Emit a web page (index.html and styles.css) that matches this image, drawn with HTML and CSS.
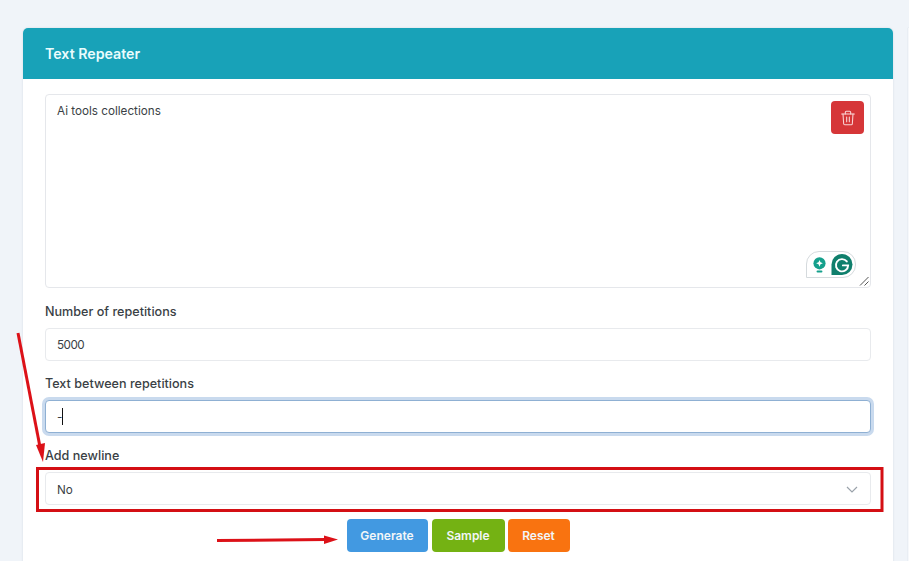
FILE: index.html
```html
<!DOCTYPE html>
<html lang="en">
<head>
    <meta charset="UTF-8">
    <meta name="viewport" content="width=device-width, initial-scale=1.0">
    <title>Text Repeater</title>
    <link rel="stylesheet" href="styles.css">
</head>
<body>

    <div class="card">
        <div class="card-header">Text Repeater</div>
        <div class="card-body">
            <div class="editor">
                <div class="editor-text">Ai tools collections</div>
                <button class="trash" type="button" aria-label="Clear">
                    <svg width="16" height="16" viewBox="0 0 24 24" fill="none" stroke="#f9d5d5" stroke-width="1.6" stroke-linecap="round" stroke-linejoin="round">
                        <path d="M2.5 6h19"/>
                        <path d="M8 6V3.5A1.5 1.5 0 0 1 9.500 2h5A1.500 1.500 0 0 1 16 3.500V6"/>
                        <path d="M4.500 6l1 14.500A1.600 1.600 0 0 0 7.100 22h9.800a1.600 1.600 0 0 0 1.600-1.500l1-14.500"/>
                        <path d="M10 10.500v7M14 10.500v7"/>
                    </svg>
                </button>
                <div class="grammarly">
                    <svg class="bulb" width="15" height="16" viewBox="0 0 15 19">
                        <circle cx="7.500" cy="7.500" r="7.200" fill="#15a08c"/>
                        <path d="M7.500 3.500l1.200 2.800 2.800 1.200-2.800 1.200-1.200 2.800-1.200-2.800-2.800-1.200 2.800-1.200z" fill="#fff"/>
                        <rect x="4" y="16" width="7" height="2.500" rx="1.200" fill="#15a08c"/>
                    </svg>
                    <svg class="g-mark" width="22" height="21" viewBox="0 0 24 24">
                        <path d="M12 0a12 12 0 0 1 0 24H0V12A12 12 0 0 1 12 0z" fill="#0f7f6c"/>
                        <path d="M17.500 8.500A7 7 0 1 0 19 13h-6" fill="none" stroke="#fff" stroke-width="2.200" stroke-linecap="round"/>
                    </svg>
                </div>
                <svg class="resizer" width="10" height="10" viewBox="0 0 10 10" stroke="#555" stroke-width="1">
                    <path d="M1 9.500L9.500 1M5.500 9.500L9.500 5.500"/>
                </svg>
            </div>

            <label class="field-label first">Number of repetitions</label>
            <div class="input"><span class="number">5000</span></div>

            <label class="field-label">Text between repetitions</label>
            <div class="input focused">-<span class="caret"></span></div>

            <label class="field-label">Add newline</label>
            <div class="input select">
                No
                <svg width="12" height="7" viewBox="0 0 12 7" fill="none" stroke="#9aa2aa" stroke-width="1.200">
                    <path d="M1 1l5 5 5-5"/>
                </svg>
            </div>

            <div class="actions">
                <button class="btn btn-blue" type="button">Generate</button>
                <button class="btn btn-green" type="button">Sample</button>
                <button class="btn btn-orange" type="button">Reset</button>
            </div>
        </div>
    </div>
    <div class="next-panel"></div>

    <!-- annotation drawn over the screenshot -->
    <svg class="marks" width="909" height="561" viewBox="0 0 909 561">
        <rect x="37.500" y="468.500" width="844.500" height="42" fill="none" stroke="#d40f14" stroke-width="3"/>
        <path d="M18 333L40 447" stroke="#dc1118" stroke-width="3" fill="none"/>
        <path d="M43 462L36 445L45 443z" fill="#dc1118"/>
        <path d="M217 540.500L326 539.500" stroke="#dc1118" stroke-width="3" fill="none"/>
        <path d="M338 539.500L324 535.500V544z" fill="#dc1118"/>
    </svg>

</body>
</html>
```

FILE: styles.css
```css
html, body {
    height: 561px;
    overflow: hidden;
}

body {
    margin: 0;
    padding: 28px 0 0 23px;
    box-sizing: border-box;
    background: #f0f4f9;
    font-family: Inter, "Noto Sans", sans-serif;
    font-size: 11.700px;
    color: #3a3f45;
    display: flex;
    align-items: flex-start;
}

.card {
    width: 870px;
    flex: none;
    background: #fff;
    border-radius: 5px 5px 0 0;
    box-shadow: 0 0 2px rgba(40, 60, 90, 0.15);
}

.card-header {
    height: 51px;
    padding: 0 22px;
    display: flex;
    align-items: center;
    background: #18a2b8;
    border-radius: 5px 5px 0 0;
    color: #eafcfd;
    font-size: 14.200px;
    font-weight: 600;
}

.card-body {
    padding: 15px 22px 20px;
}

.editor {
    position: relative;
    height: 194px;
    box-sizing: border-box;
    padding: 8px 11px;
    border: 1px solid #e5e7eb;
    border-radius: 4px;
}

.editor-text {
    line-height: 16px;
}

.trash {
    position: absolute;
    top: 6px;
    right: 6px;
    width: 33px;
    height: 33px;
    padding: 0;
    display: flex;
    align-items: center;
    justify-content: center;
    border: none;
    border-radius: 4px;
    background: #d63638;
}

.grammarly {
    position: absolute;
    right: 14px;
    bottom: 9px;
    width: 50px;
    height: 27px;
    box-sizing: border-box;
    padding-right: 2px;
    display: flex;
    align-items: center;
    justify-content: flex-end;
    gap: 4px;
    background: #fff;
    border: 1px solid #d5dadd;
    border-radius: 13px 13px 13px 0;
}

.resizer {
    position: absolute;
    right: 1px;
    bottom: 1px;
}

.field-label {
    display: block;
    margin: 15px 0 8px;
    line-height: 16px;
    font-size: 12.600px;
    font-weight: 500;
    color: #3a3f45;
}

.field-label.first {
    margin-top: 16px;
}

.input {
    height: 33px;
    box-sizing: border-box;
    padding: 0 11px;
    display: flex;
    align-items: center;
    border: 1px solid #e8eaed;
    border-radius: 4px;
    background: #fff;
}

.number {
    letter-spacing: -0.500px;
}

.input.focused {
    border-color: #8fb0d3;
    box-shadow: 0 0 0 3px #c9daee;
}

.caret {
    width: 1px;
    height: 17px;
    background: #111;
}

.select {
    justify-content: space-between;
    padding-right: 12px;
    padding-top: 2px;
}

.actions {
    margin-top: 14px;
    display: flex;
    justify-content: center;
    gap: 4px;
}

.btn {
    height: 33px;
    padding: 0;
    border: none;
    border-radius: 4px;
    color: #f2f6f8;
    font-family: inherit;
    font-size: 12px;
    font-weight: 600;
}

.btn-blue {
    width: 81px;
    background: #4299e1;
}

.btn-green {
    width: 73px;
    background: #74b213;
}

.btn-orange {
    width: 62px;
    margin-left: -1px;
    background: #f97310;
}

.next-panel {
    width: 16px;
    flex: none;
    height: 533px;
    margin-left: 15px;
    background: #f6f8fb;
    box-shadow: 0 0 1px rgba(40, 60, 90, 0.2);
}

.marks {
    position: absolute;
    top: 0;
    left: 0;
    pointer-events: none;
}
```
